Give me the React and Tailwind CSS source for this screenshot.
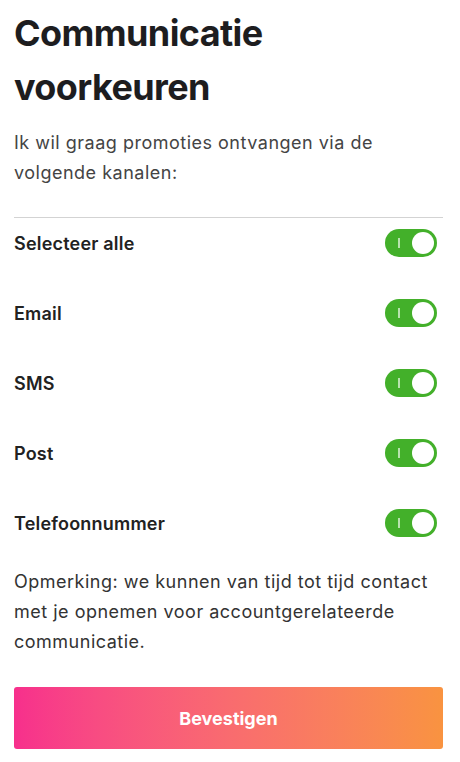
import React, { useState } from "react";

function Toggle({ on, onClick }) {
  return (
    <button
      onClick={onClick}
      className={`relative mr-[6px] flex h-[28px] w-[52px] items-center rounded-full ${on ? "bg-[#43b02a]" : "bg-[#c4c4c4]"}`}
    >
      <span className="absolute left-[13px] top-[9px] h-[10px] w-[1.5px] bg-[#b8e3ad]" />
      <span
        className={`absolute top-[3px] h-[22px] w-[22px] rounded-full bg-white ${on ? "left-[27px]" : "left-[3px]"}`}
      />
    </button>
  );
}

export default function App() {
  const [state, setState] = useState({ email: true, sms: true, post: true, tel: true });
  const all = Object.values(state).every(Boolean);
  const rows = [
    ["email", "Email"],
    ["sms", "SMS"],
    ["post", "Post"],
    ["tel", "Telefoonnummer"],
  ];
  return (
    <div
      className="bg-white pl-[14px] pr-[17px] pt-[6px] text-[#222]"
      style={{ fontFamily: "Inter, 'Noto Sans', sans-serif" }}
    >
      <h1 className="text-[36px] font-bold leading-[54px] tracking-[-0.6px] text-[#1d1d1f]">
        Communicatie voorkeuren
      </h1>
      <p className="mt-[14px] text-[18px] leading-[30px] tracking-[0.5px] text-[#444]">
        Ik wil graag promoties ontvangen via de volgende kanalen:
      </p>
      <div className="mt-[29px] border-t border-[#d3d3d3] pt-[11px]">
        <div className="flex flex-col gap-[42px]">
          <div className="flex h-[28px] items-center justify-between">
            <span className="text-[18px] font-semibold tracking-[0.2px] text-[#222]">Selecteer alle</span>
            <Toggle
              on={all}
              onClick={() => {
                const v = !all;
                setState({ email: v, sms: v, post: v, tel: v });
              }}
            />
          </div>
          {rows.map(([k, label]) => (
            <div key={k} className="flex h-[28px] items-center justify-between">
              <span className="text-[18px] font-semibold tracking-[0.2px] text-[#222]">{label}</span>
              <Toggle on={state[k]} onClick={() => setState({ ...state, [k]: !state[k] })} />
            </div>
          ))}
        </div>
      </div>
      <p className="mt-[30px] text-[18px] leading-[30px] tracking-[0.5px] text-[#333]">
        Opmerking: we kunnen van tijd tot tijd contact met je opnemen voor accountgerelateerde communicatie.
      </p>
      <button className="mt-[30px] flex h-[62px] w-full items-center justify-center rounded-[3px] bg-gradient-to-r from-[#f72f8c] to-[#f99340] text-[18px] font-bold text-white">
        Bevestigen
      </button>
      <div className="h-[13px]" />
    </div>
  );
}
